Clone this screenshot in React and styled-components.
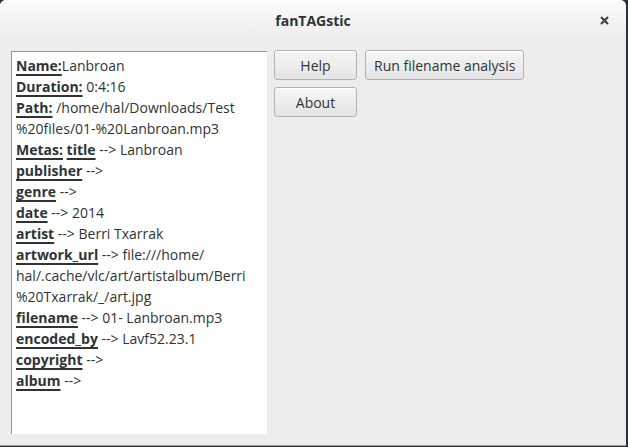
import styled, { createGlobalStyle } from "styled-components";

const Global = createGlobalStyle`
    html, body {
        margin: 0;
        padding: 0;
        background: #2c2f34;
    }
    body {
        font-family: "Open Sans", "Noto Sans", sans-serif;
        font-size: 14px;
        color: #2e3436;
    }
`;

const Window = styled.div`
    width: 626px;
    height: 446px;
    box-sizing: border-box;
    background: #ededed;
    border-radius: 6px 6px 0 0;
    border-bottom: 1px solid #9c9c9c;
    display: flex;
    flex-direction: column;
    overflow: hidden;
`;

const TitleBar = styled.div`
    height: 40px;
    flex-shrink: 0;
    display: grid;
    grid-template-columns: 1fr auto 1fr;
    align-items: center;
    background: linear-gradient(#fbfbfb, #ededed);
`;

const Title = styled.div`
    grid-column: 2;
    font-weight: bold;
    font-size: 14px;
    color: #2e3436;
`;

const Close = styled.button`
    justify-self: end;
    margin-right: 14px;
    width: 16px;
    height: 16px;
    padding: 0;
    border: none;
    background: none;
    display: flex;
    align-items: center;
    justify-content: center;
`;

const Body = styled.div`
    flex: 1;
    display: flex;
    gap: 7px;
    padding: 10px 0 11px 11px;
    min-height: 0;
`;

const TextPanel = styled.div`
    width: 256px;
    flex-shrink: 0;
    margin-top: 1px;
    box-sizing: border-box;
    background: #fff;
    border-left: 1px solid #9a9a9a;
    border-top: 1px solid #9a9a9a;
    padding: 3px 4px 0 4px;
    line-height: 21px;
    font-size: 14px;
    color: #2e3436;
    overflow: hidden;
`;

const Line = styled.div`
    white-space: nowrap;
`;

const Key = styled.span`
    font-weight: bold;
    text-decoration: underline;
    text-decoration-thickness: 1.5px;
    text-underline-offset: 3px;
`;

const Buttons = styled.div`
    display: grid;
    grid-template-columns: 83px auto;
    grid-auto-rows: 30px;
    column-gap: 8px;
    row-gap: 7px;
    align-content: start;
    justify-items: start;
`;

const Button = styled.button`
    height: 30px;
    width: ${(p) => (p.$wide ? "auto" : "83px")};
    padding: 0 8px;
    box-sizing: border-box;
    font-family: inherit;
    font-size: 14px;
    color: #2e3436;
    border: 1px solid #b2b2b2;
    border-radius: 3px;
    background: linear-gradient(#f6f6f6, #e4e4e4);
    box-shadow: inset 0 1px 0 #ffffff;
`;

const meta = [
    ["publisher", ""],
    ["genre", ""],
    ["date", "2014"],
    ["artist", "Berri Txarrak"],
];

const meta2 = [
    ["filename", "01- Lanbroan.mp3"],
    ["encoded_by", "Lavf52.23.1"],
    ["copyright", ""],
    ["album", ""],
];

const App = () => (
    <>
        <Global />
        <Window>
            <TitleBar>
                <Title>fanTAGstic</Title>
                <Close aria-label="Close">
                    <svg width="9" height="9" viewBox="0 0 9 9">
                        <path d="M1 1L8 8M8 1L1 8" stroke="#3c4447" strokeWidth="2.2" strokeLinecap="butt" />
                    </svg>
                </Close>
            </TitleBar>
            <Body>
                <TextPanel>
                    <Line><Key>Name:</Key>Lanbroan</Line>
                    <Line><Key>Duration:</Key> 0:4:16</Line>
                    <Line><Key>Path:</Key> /home/hal/Downloads/Test</Line>
                    <Line>%20files/01-%20Lanbroan.mp3</Line>
                    <Line><Key>Metas:</Key> <Key>title</Key> --&gt; Lanbroan</Line>
                    {meta.map(([k, v]) => (
                        <Line key={k}><Key>{k}</Key> --&gt; {v}</Line>
                    ))}
                    <Line><Key>artwork_url</Key> --&gt; file:///home/</Line>
                    <Line>hal/.cache/vlc/art/artistalbum/Berri</Line>
                    <Line>%20Txarrak/_/art.jpg</Line>
                    {meta2.map(([k, v]) => (
                        <Line key={k}><Key>{k}</Key> --&gt; {v}</Line>
                    ))}
                </TextPanel>
                <Buttons>
                    <Button>Help</Button>
                    <Button $wide>Run filename analysis</Button>
                    <Button>About</Button>
                </Buttons>
            </Body>
        </Window>
    </>
);

export default App;
